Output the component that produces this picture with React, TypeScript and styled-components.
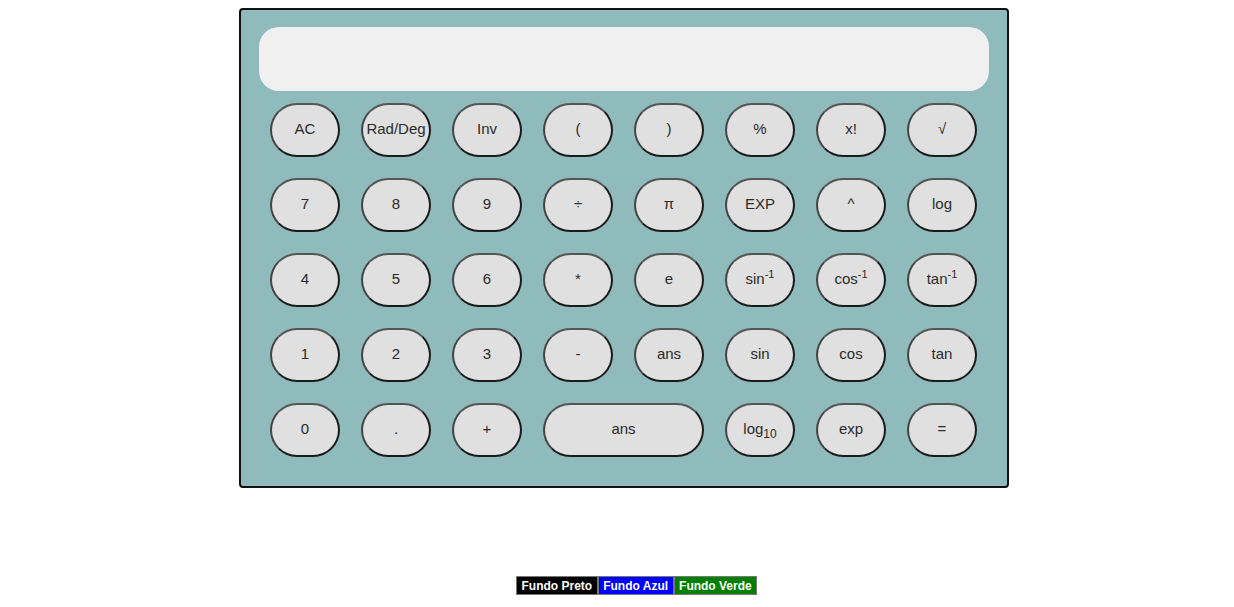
import styled, { createGlobalStyle } from "styled-components";

const GlobalStyle = createGlobalStyle`
  body {
    margin: 0;
    background: #ffffff;
    font-family: "Liberation Sans", Arial, sans-serif;
  }
`;

const Page = styled.div`
  padding-top: 8px;
`;

const Calculator = styled.div`
  box-sizing: border-box;
  width: 770px;
  height: 480px;
  margin-left: 239px;
  background: #8fbbbc;
  border: 2px solid #111;
  border-radius: 4px;
  padding: 17px 18px 0 18px;
`;

const Display = styled.div`
  height: 64px;
  background: #f0f0f0;
  border-radius: 20px;
`;

const Keys = styled.div`
  display: grid;
  grid-template-columns: repeat(8, 70px);
  grid-auto-rows: 54px;
  column-gap: 21px;
  row-gap: 21px;
  padding: 12px 11px 0 11px;
`;

const Key = styled.button<{ $wide?: boolean }>`
  grid-column: ${(p) => (p.$wide ? "span 2" : "span 1")};
  box-sizing: border-box;
  width: 100%;
  height: 54px;
  background: #e0e0e0;
  border: 2px solid #1a1a1a;
  border-top-color: #555;
  border-left-color: #444;
  border-radius: 28px;
  font-family: "Liberation Sans", Arial, sans-serif;
  font-size: 15px;
  color: #2a2a2a;
  padding: 0 0 4px 0;
  cursor: pointer;
`;

const Sup = styled.sup`
  font-size: 11px;
  line-height: 0;
`;

const Sub = styled.sub`
  font-size: 12px;
  line-height: 0;
`;

const Footer = styled.div`
  display: flex;
  margin: 88px 0 0 516px;
`;

const BgButton = styled.button<{ $bg: string }>`
  height: 19px;
  padding: 0 4.5px;
  background: ${(p) => p.$bg};
  color: #fff;
  border: 1px solid #777;
  font-family: "Liberation Sans", Arial, sans-serif;
  font-weight: bold;
  font-size: 12px;
  cursor: pointer;
`;

const keys: { label: React.ReactNode; wide?: boolean }[] = [
  { label: "AC" },
  { label: "Rad/Deg" },
  { label: "Inv" },
  { label: "(" },
  { label: ")" },
  { label: "%" },
  { label: "x!" },
  { label: "√" },
  { label: "7" },
  { label: "8" },
  { label: "9" },
  { label: "÷" },
  { label: "π" },
  { label: "EXP" },
  { label: "^" },
  { label: "log" },
  { label: "4" },
  { label: "5" },
  { label: "6" },
  { label: "*" },
  { label: "e" },
  { label: <>sin<Sup>-1</Sup></> },
  { label: <>cos<Sup>-1</Sup></> },
  { label: <>tan<Sup>-1</Sup></> },
  { label: "1" },
  { label: "2" },
  { label: "3" },
  { label: "-" },
  { label: "ans" },
  { label: "sin" },
  { label: "cos" },
  { label: "tan" },
  { label: "0" },
  { label: "." },
  { label: "+" },
  { label: "ans", wide: true },
  { label: <>log<Sub>10</Sub></> },
  { label: "exp" },
  { label: "=" },
];

const App = () => {
  return (
    <Page>
      <GlobalStyle />
      <Calculator>
        <Display />
        <Keys>
          {keys.map((k, i) => (
            <Key key={i} $wide={k.wide}>
              {k.label}
            </Key>
          ))}
        </Keys>
      </Calculator>
      <Footer>
        <BgButton $bg="#000000">Fundo Preto</BgButton>
        <BgButton $bg="#0000ff">Fundo Azul</BgButton>
        <BgButton $bg="#008000">Fundo Verde</BgButton>
      </Footer>
    </Page>
  );
};

export default App;
